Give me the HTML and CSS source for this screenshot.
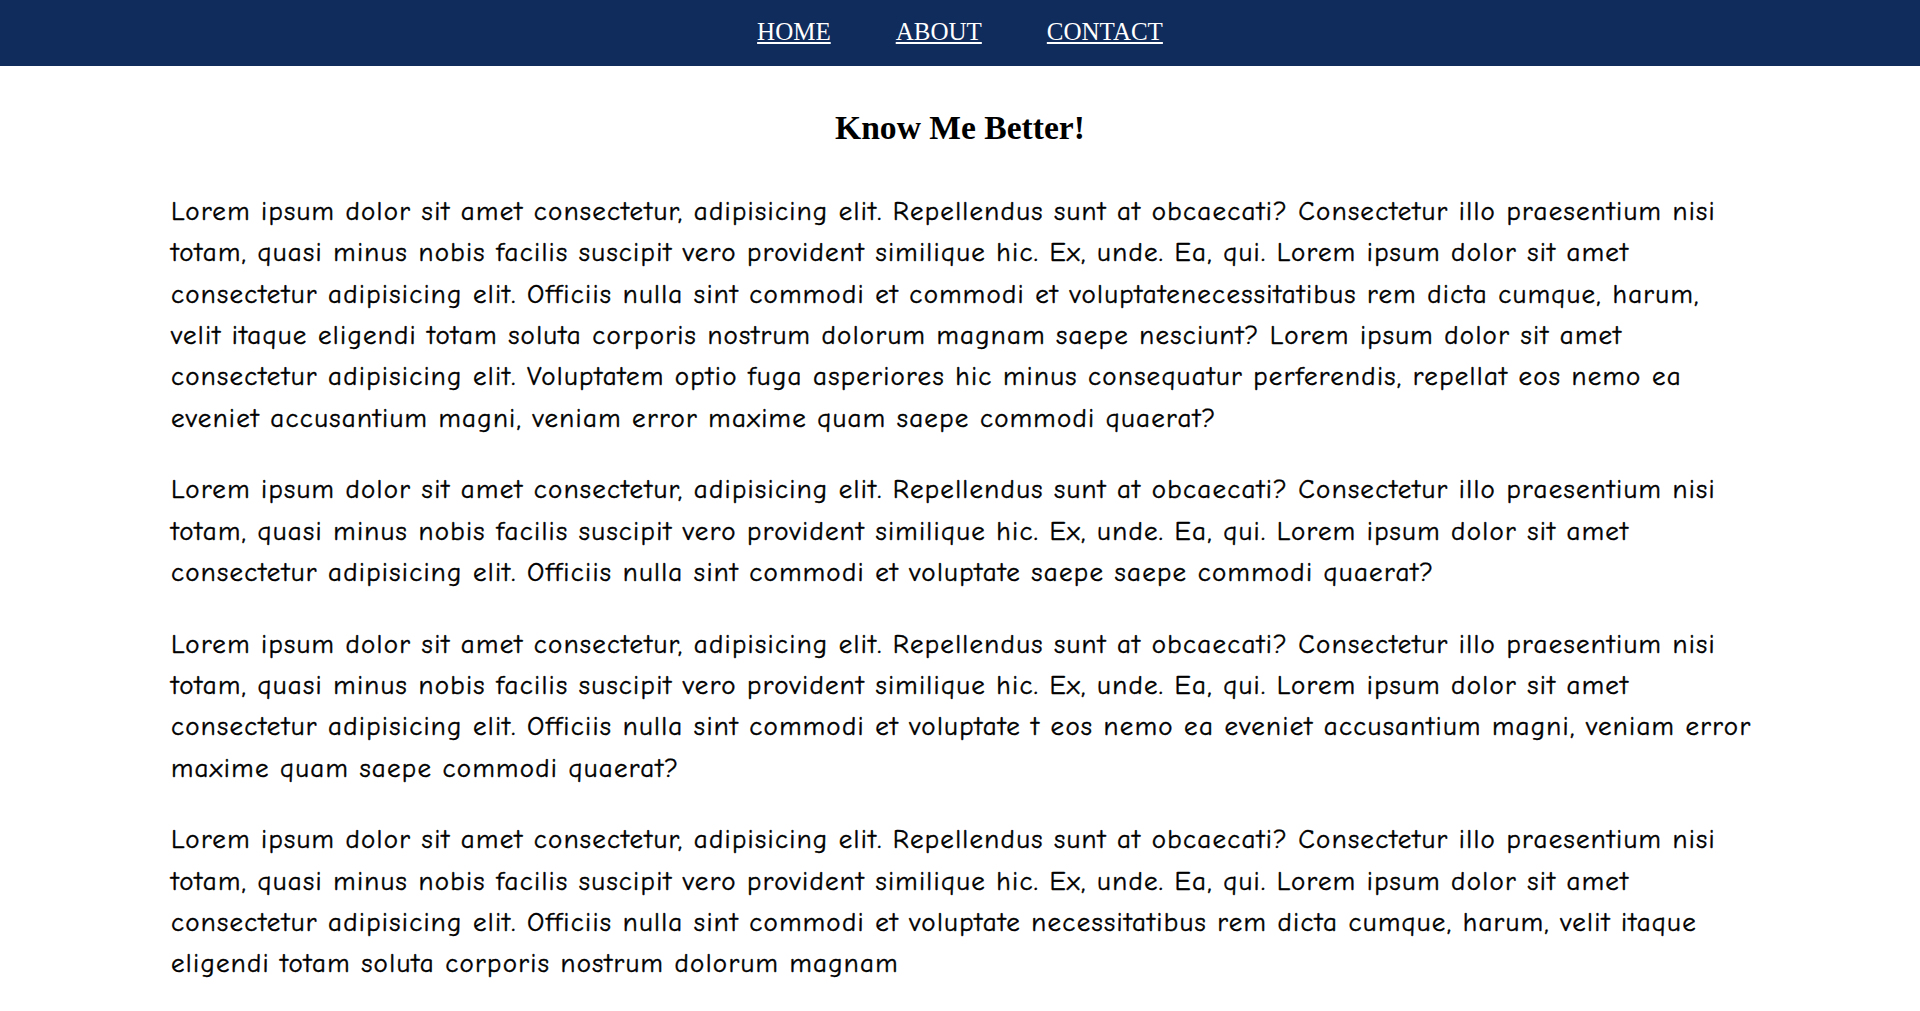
FILE: index.html
```html
<!DOCTYPE html>
<html lang="en">
<head>
<meta charset="utf-8">
<title>About</title>
<link rel="stylesheet" href="styles.css">
</head>
<body>
<nav class="topnav">
  <a class="topnav__link" href="#">HOME</a>
  <a class="topnav__link" href="#">ABOUT</a>
  <a class="topnav__link" href="#">CONTACT</a>
</nav>
<main class="about">
  <h1 class="about__title">Know Me Better!</h1>
  <div class="about__body">
    <p class="about__text">Lorem ipsum dolor sit amet consectetur, adipisicing elit. Repellendus sunt at obcaecati? Consectetur illo praesentium nisi totam, quasi minus nobis facilis suscipit vero provident similique hic. Ex, unde. Ea, qui. Lorem ipsum dolor sit amet consectetur adipisicing elit. Officiis nulla sint commodi et commodi et voluptatenecessitatibus rem dicta cumque, harum, velit itaque eligendi totam soluta corporis nostrum dolorum magnam saepe nesciunt? Lorem ipsum dolor sit amet consectetur adipisicing elit. Voluptatem optio fuga asperiores hic minus consequatur perferendis, repellat eos nemo ea eveniet accusantium magni, veniam error maxime quam saepe commodi quaerat?</p>
    <p class="about__text">Lorem ipsum dolor sit amet consectetur, adipisicing elit. Repellendus sunt at obcaecati? Consectetur illo praesentium nisi totam, quasi minus nobis facilis suscipit vero provident similique hic. Ex, unde. Ea, qui. Lorem ipsum dolor sit amet consectetur adipisicing elit. Officiis nulla sint commodi et voluptate saepe saepe commodi quaerat?</p>
    <p class="about__text">Lorem ipsum dolor sit amet consectetur, adipisicing elit. Repellendus sunt at obcaecati? Consectetur illo praesentium nisi totam, quasi minus nobis facilis suscipit vero provident similique hic. Ex, unde. Ea, qui. Lorem ipsum dolor sit amet consectetur adipisicing elit. Officiis nulla sint commodi et voluptate t eos nemo ea eveniet accusantium magni, veniam error maxime quam saepe commodi quaerat?</p>
    <p class="about__text">Lorem ipsum dolor sit amet consectetur, adipisicing elit. Repellendus sunt at obcaecati? Consectetur illo praesentium nisi totam, quasi minus nobis facilis suscipit vero provident similique hic. Ex, unde. Ea, qui. Lorem ipsum dolor sit amet consectetur adipisicing elit. Officiis nulla sint commodi et voluptate necessitatibus rem dicta cumque, harum, velit itaque eligendi totam soluta corporis nostrum dolorum magnam</p>
  </div>
</main>
</body>
</html>
```
FILE: styles.css
```css
html, body {
  margin: 0;
  padding: 0;
  background: #ffffff;
}

body {
  font-family: "Liberation Serif", "Times New Roman", serif;
  color: #000000;
}

.topnav {
  height: 66px;
  background: #102c5c;
  display: flex;
  justify-content: center;
  align-items: center;
  gap: 65px;
  padding-bottom: 2px;
  box-sizing: border-box;
}

.topnav__link {
  font-family: "Liberation Serif", "Times New Roman", serif;
  font-size: 25px;
  color: #ffffff;
  text-decoration: underline;
}

.about__title {
  margin: 42px 0 43px;
  font-family: "Liberation Serif", "Times New Roman", serif;
  font-size: 33.6px;
  font-weight: bold;
  line-height: 40px;
  text-align: center;
}

.about__body {
  margin: 0 164px 0 171px;
}

.about__text {
  margin: 0 0 30.3px;
  font-family: "Comic Sans MS", "Comic Neue", cursive;
  font-size: 27px;
  letter-spacing: 1.28px;
  line-height: 41.35px;
  -webkit-text-stroke: 0.4px #000;
}
```
